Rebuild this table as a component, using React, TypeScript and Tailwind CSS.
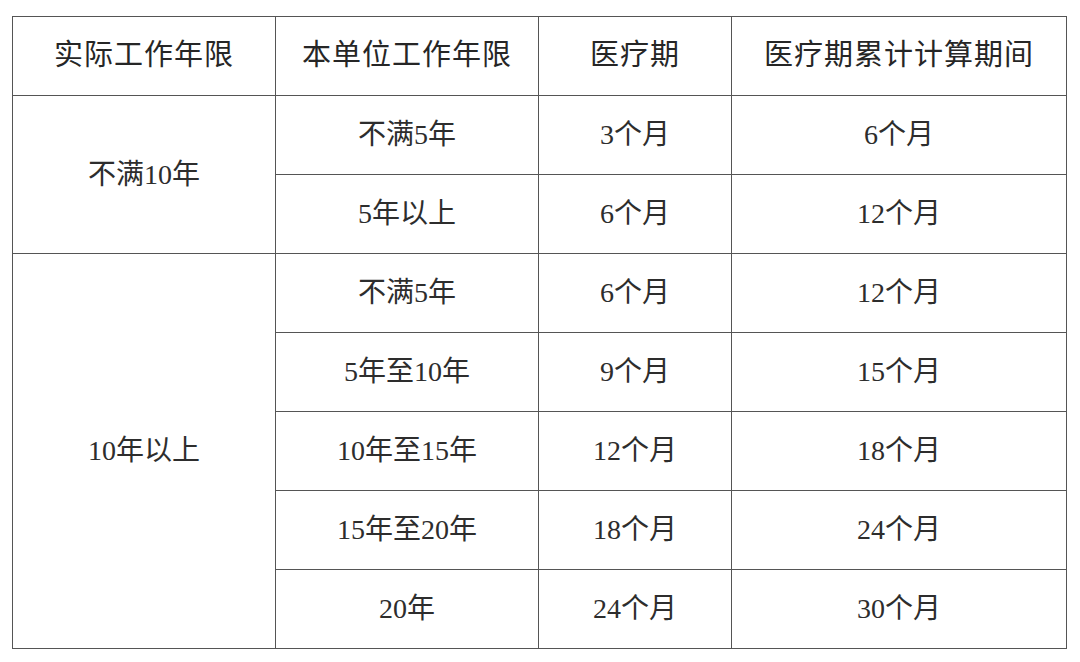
const head = ["实际工作年限", "本单位工作年限", "医疗期", "医疗期累计计算期间"];

const groups = [
  {
    label: "不满10年",
    rows: [
      ["不满5年", "3个月", "6个月"],
      ["5年以上", "6个月", "12个月"],
    ],
  },
  {
    label: "10年以上",
    rows: [
      ["不满5年", "6个月", "12个月"],
      ["5年至10年", "9个月", "15个月"],
      ["10年至15年", "12个月", "18个月"],
      ["15年至20年", "18个月", "24个月"],
      ["20年", "24个月", "30个月"],
    ],
  },
];

const serif = "font-['Liberation_Serif','Noto_Sans_CJK_SC',serif]";
const cell = "border border-[#555] text-center align-middle p-0";

export default function App() {
  return (
    <main className="w-[1080px] h-[662px] bg-white pt-4 pl-3">
      <table className="table-fixed border-collapse w-[1054px] text-[#2d2d2d]">
        <colgroup>
          <col className="w-[263px]" />
          <col className="w-[263px]" />
          <col className="w-[193px]" />
          <col className="w-[335px]" />
        </colgroup>
        <thead>
          <tr className="h-[79px]">
            {head.map((h) => (
              <th key={h} className={`${cell} ${serif} text-[29px] font-normal tracking-[1px] text-[#262626]`}>
                {h}
              </th>
            ))}
          </tr>
        </thead>
        <tbody>
          {groups.map((g) =>
            g.rows.map((r, i) => (
              <tr key={g.label + i} className="h-[79px]">
                {i === 0 && (
                  <td rowSpan={g.rows.length} className={`${cell} ${serif} text-[28px]`}>
                    {g.label}
                  </td>
                )}
                <td className={`${cell} ${serif} text-[28px]`}>{r[0]}</td>
                <td className={`${cell} ${serif} text-[28px]`}>{r[1]}</td>
                <td className={`${cell} ${serif} text-[28px]`}>{r[2]}</td>
              </tr>
            ))
          )}
        </tbody>
      </table>
    </main>
  );
}
